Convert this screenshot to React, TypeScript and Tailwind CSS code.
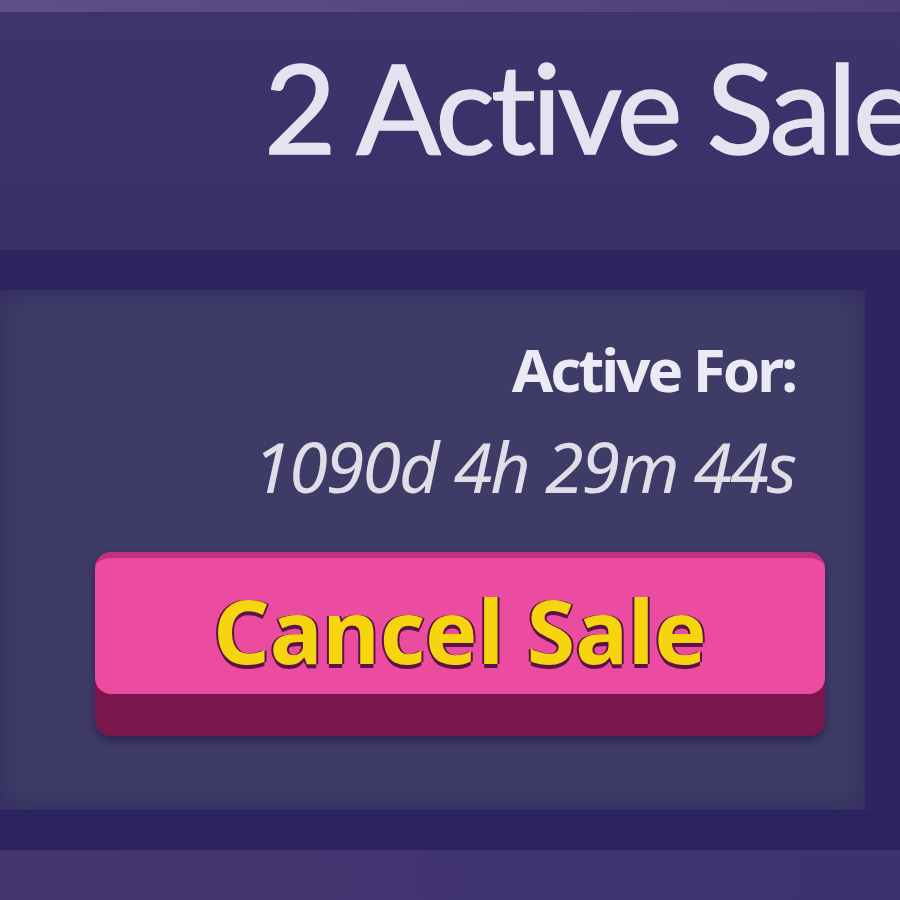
import React from 'react';

const App: React.FC = () => {
  return (
    <div className="w-[900px] h-[900px] overflow-hidden flex flex-col bg-[#3c3168] font-['Noto_Sans',sans-serif]">
      {/* top edge */}
      <div className="h-[12px] bg-gradient-to-r from-[#5e4f86] to-[#4d3f7c]" />

      {/* header */}
      <div className="h-[238px] bg-gradient-to-b from-[#3e336b] to-[#3a2f68] pl-[264px] pt-[24px] whitespace-nowrap overflow-hidden">
        <span className="font-['Lato',sans-serif] text-[125px] leading-[140px] font-normal tracking-[-4px] text-[#e6e3f0] [-webkit-text-stroke:1.5px_#e6e3f0]">
          2 Active Sales
        </span>
      </div>

      {/* divider */}
      <div className="h-[40px] bg-[#2d2460]" />

      {/* sale row */}
      <div className="h-[520px] flex">
        <div className="flex-1 bg-[#3e3b66] shadow-[inset_0_0_24px_rgba(40,32,90,0.6)] flex flex-col items-end pr-[70px] pt-[44px]">
          <div className="text-[60px] leading-[70px] font-bold tracking-[-3px] text-[#eceaf4]">Active For:</div>
          <div className="mt-[22px] text-[70px] leading-[80px] italic tracking-[-2px] text-[#e0dde8]">1090d 4h 29m 44s</div>
          <div className="mt-[46px] w-[730px] -mr-[30px] h-[184px] rounded-[16px] bg-[#7a184d] shadow-[0_4px_10px_rgba(30,20,60,0.6)]">
            <div className="h-[142px] rounded-[16px] bg-[#ec4c9f] flex items-center justify-center pt-[8px] border-t-[6px] border-[#c23180]">
              <span className="text-[88px] leading-none font-bold tracking-[0px] text-[#f6d40e] [text-shadow:0_4px_0_#5a1348,2px_0_0_#5a1348,-2px_0_0_#5a1348]">
                Cancel Sale
              </span>
            </div>
          </div>
        </div>
        <div className="w-[35px] bg-[#2d2461]" />
      </div>

      {/* bottom */}
      <div className="h-[40px] bg-[#2a2360]" />
      <div className="flex-1 bg-gradient-to-r from-[#453670] to-[#3c3270]" />
    </div>
  );
};

export default App;
